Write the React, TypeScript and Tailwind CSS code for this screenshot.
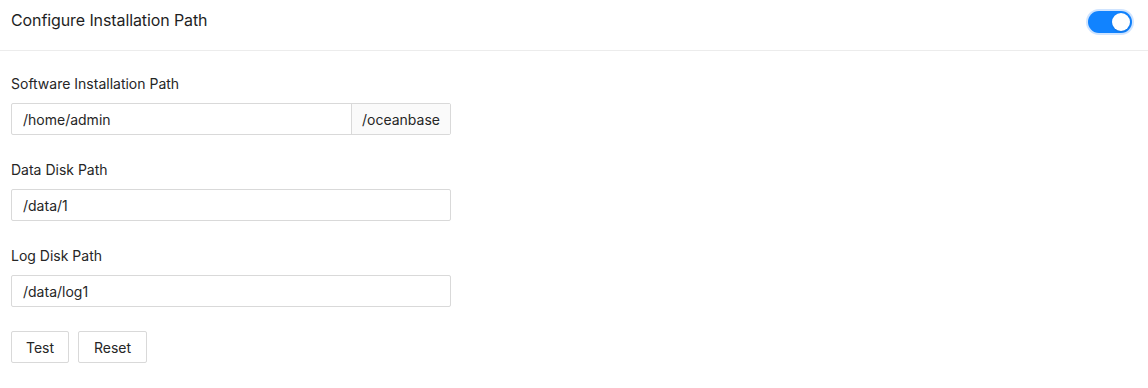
import { useState } from 'react';

function Toggle({ on }: { on: boolean }) {
  return (
    <button
      className={`relative h-[22px] w-[44px] rounded-full ring-2 ring-[#cfe4ff] ${on ? 'bg-[#1183ff]' : 'bg-gray-300'}`}
    >
      <span className={`absolute top-[2px] h-[18px] w-[18px] rounded-full bg-white shadow-sm ${on ? 'left-[24px]' : 'left-[2px]'}`} />
    </button>
  );
}

function Field({ label, value, addon }: { label: string; value: string; addon?: string }) {
  return (
    <div className="flex flex-col">
      <label className="text-[14px] leading-[22px] pb-2">{label}</label>
      <div className="flex w-[440px] h-[32px] border border-[#d9d9d9] rounded-[2px] bg-white">
        <input
          className="flex-1 min-w-0 px-[11px] text-[14px] outline-none bg-transparent"
          defaultValue={value}
        />
        {addon && (
          <span className="w-[99px] flex items-center justify-center border-l border-[#d9d9d9] bg-[#fafafa] text-[14px]">
            {addon}
          </span>
        )}
      </div>
    </div>
  );
}

export default function App() {
  const [enabled] = useState(true);

  return (
    <div className="w-[1148px] h-[388px] bg-white text-[#262626] font-['Inter','Noto_Sans',sans-serif]">
      <div className="flex justify-between items-start h-[51px] border-b border-[#ececec] pl-[11px] pr-[16px]">
        <h2 className="text-[16px] leading-[24px] mt-[8px] font-normal text-[#1f1f1f] tracking-[-0.1px]">Configure Installation Path</h2>
        <div className="mt-[11px]">
          <Toggle on={enabled} />
        </div>
      </div>

      <div className="pl-[11px] pt-[22px] flex flex-col gap-[24px]">
        <Field label="Software Installation Path" value="/home/admin" addon="/oceanbase" />
        <Field label="Data Disk Path" value="/data/1" />
        <Field label="Log Disk Path" value="/data/log1" />
      </div>

      <div className="pl-[11px] pt-[24px] flex gap-[9px]">
        <button className="h-[32px] w-[58px] border border-[#d9d9d9] rounded-[2px] text-[14px] bg-white">Test</button>
        <button className="h-[32px] w-[69px] border border-[#d9d9d9] rounded-[2px] text-[14px] bg-white">Reset</button>
      </div>
    </div>
  );
}
